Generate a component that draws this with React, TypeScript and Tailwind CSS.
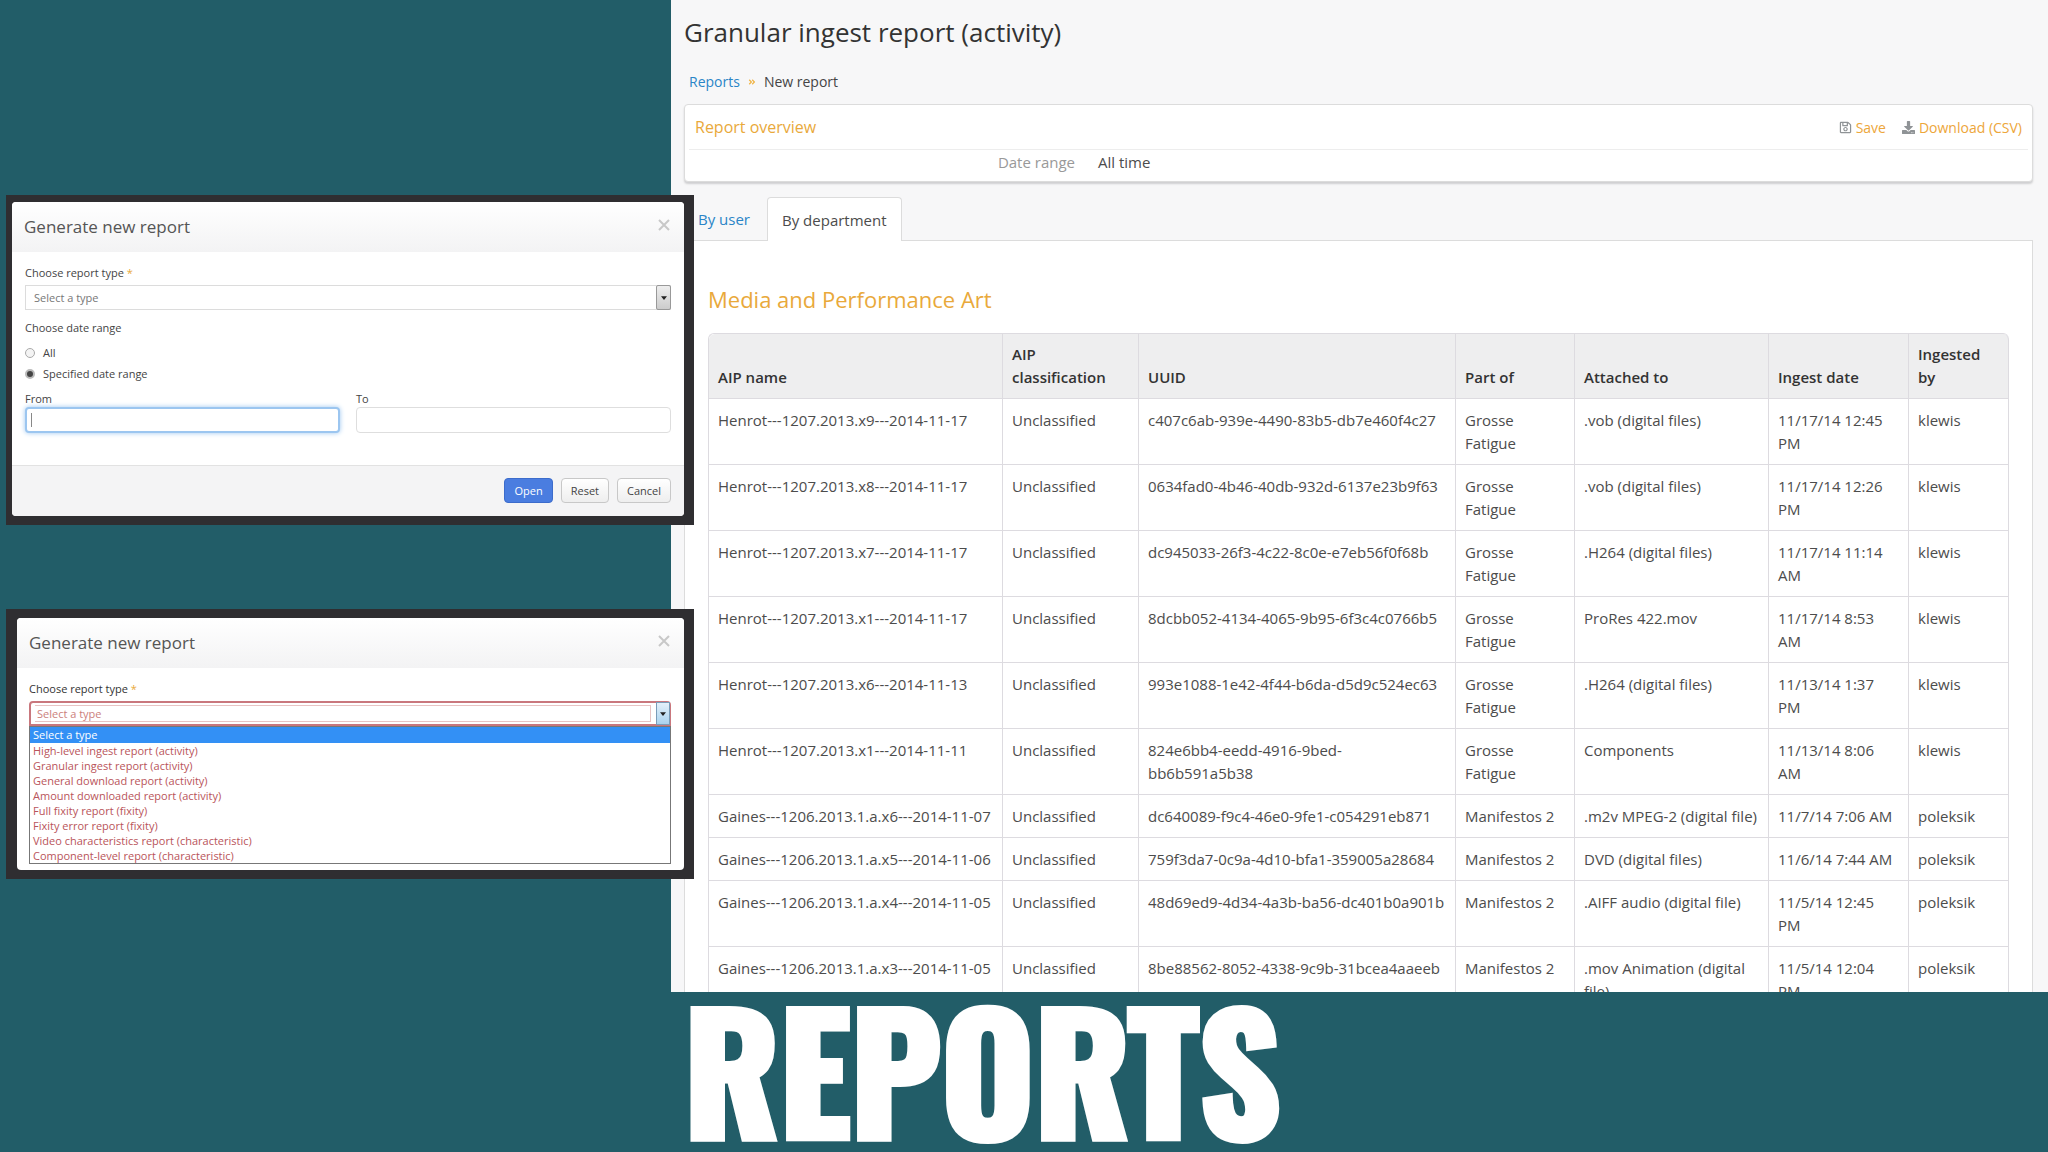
import type { ReactNode } from 'react';
import { FaAngleDoubleRight, FaDownload, FaRegSave } from 'react-icons/fa';

type Row = {
  name: string;
  uuid: string;
  partOf: string;
  attachedTo: string;
  date: string;
  by: string;
};

const columns = [
  { label: 'AIP name', width: 'w-[294px]' },
  { label: 'AIP classification', width: 'w-[136px]' },
  { label: 'UUID', width: 'w-[317px]' },
  { label: 'Part of', width: 'w-[119px]' },
  { label: 'Attached to', width: 'w-[194px]' },
  { label: 'Ingest date', width: 'w-[140px]' },
  { label: 'Ingested by', width: 'w-[100px]' },
];

const rows: Row[] = [
  { name: 'Henrot---1207.2013.x9---2014-11-17', uuid: 'c407c6ab-939e-4490-83b5-db7e460f4c27', partOf: 'Grosse Fatigue', attachedTo: '.vob (digital files)', date: '11/17/14 12:45 PM', by: 'klewis' },
  { name: 'Henrot---1207.2013.x8---2014-11-17', uuid: '0634fad0-4b46-40db-932d-6137e23b9f63', partOf: 'Grosse Fatigue', attachedTo: '.vob (digital files)', date: '11/17/14 12:26 PM', by: 'klewis' },
  { name: 'Henrot---1207.2013.x7---2014-11-17', uuid: 'dc945033-26f3-4c22-8c0e-e7eb56f0f68b', partOf: 'Grosse Fatigue', attachedTo: '.H264 (digital files)', date: '11/17/14 11:14 AM', by: 'klewis' },
  { name: 'Henrot---1207.2013.x1---2014-11-17', uuid: '8dcbb052-4134-4065-9b95-6f3c4c0766b5', partOf: 'Grosse Fatigue', attachedTo: 'ProRes 422.mov', date: '11/17/14 8:53 AM', by: 'klewis' },
  { name: 'Henrot---1207.2013.x6---2014-11-13', uuid: '993e1088-1e42-4f44-b6da-d5d9c524ec63', partOf: 'Grosse Fatigue', attachedTo: '.H264 (digital files)', date: '11/13/14 1:37 PM', by: 'klewis' },
  { name: 'Henrot---1207.2013.x1---2014-11-11', uuid: '824e6bb4-eedd-4916-9bed-\nbb6b591a5b38', partOf: 'Grosse Fatigue', attachedTo: 'Components', date: '11/13/14 8:06 AM', by: 'klewis' },
  { name: 'Gaines---1206.2013.1.a.x6---2014-11-07', uuid: 'dc640089-f9c4-46e0-9fe1-c054291eb871', partOf: 'Manifestos 2', attachedTo: '.m2v MPEG-2 (digital file)', date: '11/7/14 7:06 AM', by: 'poleksik' },
  { name: 'Gaines---1206.2013.1.a.x5---2014-11-06', uuid: '759f3da7-0c9a-4d10-bfa1-359005a28684', partOf: 'Manifestos 2', attachedTo: 'DVD (digital files)', date: '11/6/14 7:44 AM', by: 'poleksik' },
  { name: 'Gaines---1206.2013.1.a.x4---2014-11-05', uuid: '48d69ed9-4d34-4a3b-ba56-dc401b0a901b', partOf: 'Manifestos 2', attachedTo: '.AIFF audio (digital file)', date: '11/5/14 12:45 PM', by: 'poleksik' },
  { name: 'Gaines---1206.2013.1.a.x3---2014-11-05', uuid: '8be88562-8052-4338-9c9b-31bcea4aaeeb', partOf: 'Manifestos 2', attachedTo: '.mov Animation (digital file)', date: '11/5/14 12:04 PM', by: 'poleksik' },
];

const reportTypes = [
  'High-level ingest report (activity)',
  'Granular ingest report (activity)',
  'General download report (activity)',
  'Amount downloaded report (activity)',
  'Full fixity report (fixity)',
  'Fixity error report (fixity)',
  'Video characteristics report (characteristic)',
  'Component-level report (characteristic)',
];

function Caret() {
  return (
    <svg viewBox="0 0 8 5" className="w-[6px] h-1" fill="#222">
      <path d="M0 0h8L4 5z" />
    </svg>
  );
}

function Modal({ className, children }: { className: string; children: ReactNode }) {
  return (
    <section className={`bg-[#2f2e31] text-[11px] leading-4 text-[#444] ${className}`}>
      <div className="bg-white rounded-sm overflow-hidden">
        <header className="flex items-start justify-between h-[50px] pl-3 pr-[10px] pt-[13px] bg-linear-to-b from-white to-[#f3f3f4]">
          <h2 className="text-[17px] leading-6 text-[#555]">Generate new report</h2>
          <button aria-label="Close" className="p-1 text-[#c8c8c8]">
            <svg viewBox="0 0 12 12" className="w-3 h-3" fill="none" stroke="currentColor" strokeWidth="2">
              <path d="M1 1l10 10M11 1L1 11" />
            </svg>
          </button>
        </header>
        {children}
      </div>
    </section>
  );
}

function DateRangeModal() {
  return (
    <Modal className="pl-[6px] pr-[10px] pt-[7px] pb-[9px]">
      <form>
        <div className="px-[13px] pt-[13px] pb-8">
          <label htmlFor="type" className="block">
            Choose report type <span className="text-[#e9a93b]">*</span>
          </label>
          <div className="relative mt-1">
            <select id="type" className="block w-full h-[25px] pl-2 appearance-none border border-[#dcdcdc] bg-white text-[#777]">
              <option>Select a type</option>
            </select>
            <span className="absolute right-0 top-0 flex items-center justify-center w-[15px] h-[25px] border border-[#999] rounded-xs bg-linear-to-b from-[#eee] to-[#ccc] pointer-events-none">
              <Caret />
            </span>
          </div>
          <fieldset>
            <legend className="pt-[10px] pb-[6px]">Choose date range</legend>
            <label className="flex items-center gap-2 h-[21px]">
              <input type="radio" name="range" className="appearance-none w-[10px] h-[10px] rounded-full border border-[#aaa] bg-[#f4f4f4]" />
              All
            </label>
            <label className="flex items-center gap-2 h-[21px]">
              <input type="radio" name="range" defaultChecked className="appearance-none w-[10px] h-[10px] rounded-full border-2 border-[#bbb] bg-[#444]" />
              Specified date range
            </label>
          </fieldset>
          <div className="grid grid-cols-2 gap-4 pt-[7px]">
            <div>
              <label htmlFor="from" className="block">From</label>
              <div className="relative">
                <input id="from" className="block w-full h-[26px] rounded-sm border-2 border-[#9cc6f0] bg-white shadow-[0_0_5px_#9cc6f0]" />
                <span className="absolute left-[6px] top-[6px] w-px h-[14px] bg-[#888]" />
              </div>
            </div>
            <div>
              <label htmlFor="to" className="block">To</label>
              <input id="to" className="block w-full h-[26px] rounded-sm border border-[#dedede] bg-white" />
            </div>
          </div>
        </div>
        <footer className="flex justify-end gap-2 px-[13px] pt-3 pb-[13px] border-t border-[#e2e2e2] bg-[#f4f4f5]">
          <button type="button" className="h-[25px] px-[9px] rounded-sm border border-[#3c6ccb] bg-[#4a7de0] text-white">Open</button>
          <button type="reset" className="h-[25px] px-[9px] rounded-sm border border-[#c8c8c8] bg-linear-to-b from-white to-[#eee]">Reset</button>
          <button type="button" className="h-[25px] px-[9px] rounded-sm border border-[#c8c8c8] bg-linear-to-b from-white to-[#eee]">Cancel</button>
        </footer>
      </form>
    </Modal>
  );
}

function TypeListModal() {
  return (
    <Modal className="pl-[11px] pr-[10px] py-[9px]">
      <div className="pl-3 pr-[13px] pt-[13px] pb-[6px]">
        <label htmlFor="open-type" className="block text-[#333]">
          Choose report type <span className="text-[#e9a93b]">*</span>
        </label>
        <div className="relative mt-1">
          <select id="open-type" className="block w-full h-[25px] pl-[6px] appearance-none rounded-t-sm border-2 border-[#c9777d] bg-white text-[#cc7f7c]">
            <option>Select a type</option>
          </select>
          <span className="absolute left-[6px] right-[20px] inset-y-1 border border-[#e8c4c4] border-l-0 pointer-events-none" />
          <span className="absolute right-px top-px flex items-center justify-center w-[14px] h-[23px] border border-[#7a9cb8] bg-linear-to-b from-[#e4f1fa] to-[#a9d2ee] pointer-events-none">
            <Caret />
          </span>
        </div>
        <ul role="listbox" aria-label="Report types" className="border border-[#777] text-[#b9545a] leading-[15px]">
          <li role="option" aria-selected="true" className="px-[3px] h-4 bg-[#3390f5] text-white">Select a type</li>
          {reportTypes.map((type) => (
            <li key={type} role="option" aria-selected="false" className="px-[3px]">{type}</li>
          ))}
        </ul>
      </div>
    </Modal>
  );
}

function ReportTable() {
  return (
    <table className="w-full table-fixed border-separate border-spacing-0 border-t border-l border-[#dddbe0] rounded-t-md text-[15px] leading-[23px]">
      <thead className="bg-[#eeeeef]">
        <tr>
          {columns.map((col) => (
            <th key={col.label} className={`${col.width} px-[9px] pt-[9px] pb-[9px] border-r border-b border-[#dddbe0] text-left align-bottom font-semibold text-[#333] first:rounded-tl-md last:rounded-tr-md`}>
              {col.label}
            </th>
          ))}
        </tr>
      </thead>
      <tbody>
        {rows.map((row) => (
          <tr key={row.uuid} className="align-top *:px-[9px] *:pt-[10px] *:pb-[9px] *:border-r *:border-b *:border-[#dddbe0]">
            <td className="whitespace-nowrap">{row.name}</td>
            <td>Unclassified</td>
            <td className="whitespace-pre">{row.uuid}</td>
            <td>{row.partOf}</td>
            <td>{row.attachedTo}</td>
            <td>{row.date}</td>
            <td>{row.by}</td>
          </tr>
        ))}
      </tbody>
    </table>
  );
}

export default function App() {
  return (
    <div className="flex flex-col h-screen overflow-hidden bg-[#225d68] font-['Open_Sans',sans-serif] text-[15px] text-[#4c4c4c]">
      <div className="grid grid-cols-[671fr_1377fr] flex-1 min-h-0">
        <aside className="relative z-10 flex flex-col gap-[84px] pl-[6px] pt-[195px] -mr-[23px]">
          <DateRangeModal />
          <TypeListModal />
        </aside>

        <main className="flex flex-col pl-[13px] pr-[15px] bg-[#f7f7f8] overflow-hidden">
          <h1 className="pt-3 text-[26px] leading-10 text-[#333]">Granular ingest report (activity)</h1>
          <nav className="flex items-center gap-2 pl-[5px] pt-[18px] pb-[10px] text-[14px] leading-6 text-[#444]">
            <a href="#reports" className="text-[#2a85c7]">Reports</a>
            <FaAngleDoubleRight className="w-2 h-2 text-[#f0b445]" />
            <span>New report</span>
          </nav>

          <section className="rounded-sm border border-[#dcdcdc] bg-white shadow-[0_2px_2px_#cfcfd1]">
            <div className="flex items-center justify-between mx-1 px-[6px] h-[45px] border-b border-[#ededed]">
              <h2 className="text-[16px] text-[#e9a93b]">Report overview</h2>
              <div className="flex gap-4 text-[14px] text-[#eda63a]">
                <button className="flex items-center gap-1">
                  <FaRegSave className="w-[13px] h-[13px] text-[#8f9396]" />
                  Save
                </button>
                <button className="flex items-center gap-1">
                  <FaDownload className="w-[13px] h-[13px] text-[#8f9396]" />
                  Download (CSV)
                </button>
              </div>
            </div>
            <dl className="flex gap-[23px] h-[31px] leading-6">
              <dt className="w-[390px] text-right text-[#999]">Date range</dt>
              <dd>All time</dd>
            </dl>
          </section>

          <div role="tablist" className="relative flex gap-[3px] pt-[15px] leading-6">
            <button role="tab" aria-selected="false" className="px-[14px] text-[#2a85c7]">By user</button>
            <button role="tab" aria-selected="true" className="-mb-px px-[14px] h-[44px] rounded-t-sm border border-b-0 border-[#dcdcdc] bg-white">
              By department
            </button>
          </div>

          <section className="flex-1 pl-[23px] pr-[25px] pt-[39px] border border-b-0 border-[#dcdcdc] bg-white">
            <h2 className="pb-[15px] text-[22px] leading-[38px] text-[#e9a93b]">Media and Performance Art</h2>
            <ReportTable />
          </section>
        </main>
      </div>

      <footer className="h-40 pl-[684px]">
        <h1 className="font-['Impact','Oswald',sans-serif] font-bold text-[159px] leading-[150px] text-white [-webkit-text-stroke:6px_white]">REPORTS</h1>
      </footer>
    </div>
  );
}
